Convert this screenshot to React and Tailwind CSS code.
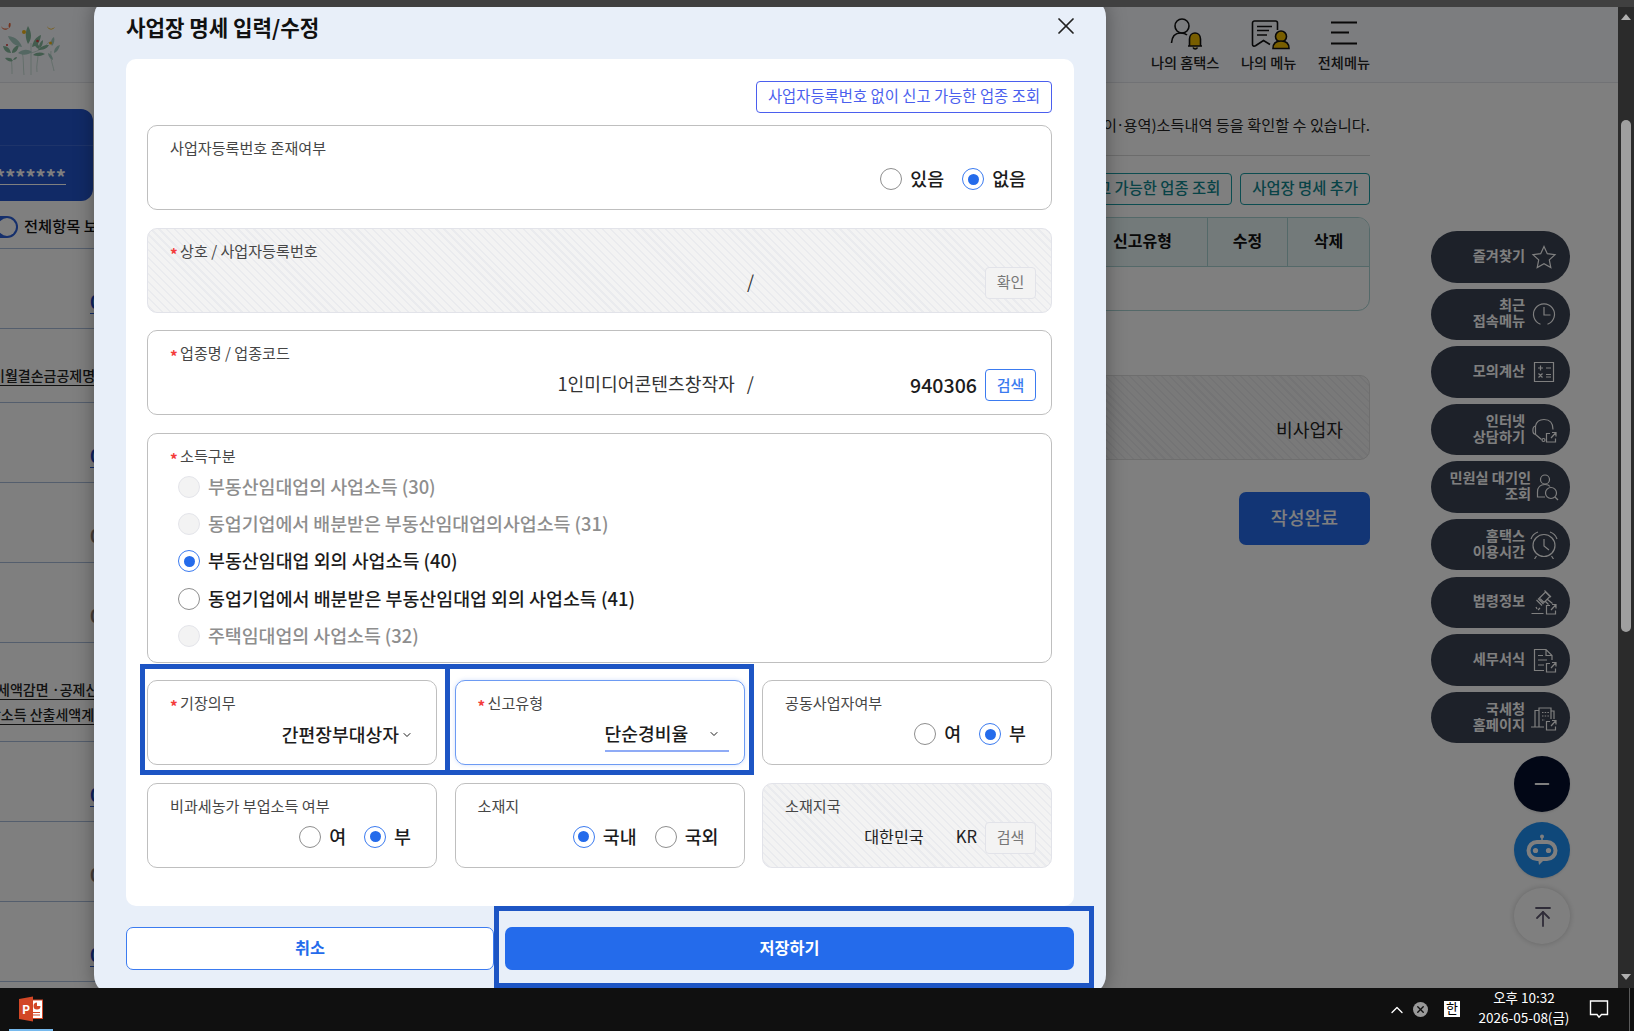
import {
  ArrowUpToLine,
  ChevronDown,
  ChevronUp,
  Minus,
  X,
} from "lucide-react";

const quickMenu = [
  { lines: ["즐겨찾기"], icon: "star" },
  { lines: ["최근", "접속메뉴"], icon: "clock" },
  { lines: ["모의계산"], icon: "calc" },
  { lines: ["인터넷", "상담하기"], icon: "headset" },
  { lines: ["민원실 대기인", "조회"], icon: "person", wide: true },
  { lines: ["홈택스", "이용시간"], icon: "alarm" },
  { lines: ["법령정보"], icon: "gavel" },
  { lines: ["세무서식"], icon: "doc" },
  { lines: ["국세청", "홈페이지"], icon: "building" },
];

const incomeTypes = [
  { label: "부동산임대업의 사업소득 (30)", disabled: true },
  { label: "동업기업에서 배분받은 부동산임대업의사업소득 (31)", disabled: true },
  { label: "부동산임대업 외의 사업소득 (40)", checked: true },
  { label: "동업기업에서 배분받은 부동산임대업 외의 사업소득 (41)" },
  { label: "주택임대업의 사업소득 (32)", disabled: true },
];

const external = <path d="M20 17.500h-3.500v8.500h9v-3.500M22 16.500h4v4M26 16.500l-5 5.500" />;

const quickIcons = {
  star: <path d="M14 3.500l3.300 7.200 7.700.9-5.700 5.300 1.500 7.700-6.800-3.900-6.800 3.900 1.500-7.700L3 11.600l7.700-.9z" />,
  clock: (
    <>
      <path d="M10.500 24.200a10.500 10.500 0 1 1 7 0" />
      <path d="M14 7v8h6.500" />
    </>
  ),
  calc: (
    <>
      <path d="M4.500 4.500h19v19h-19z" />
      <path d="M8 10h5M10.500 7.500v5M16 10h5M8.500 15.500l4 4M12.500 15.500l-4 4M16 16.500h5M16 19h5" />
    </>
  ),
  headset: (
    <>
      <path d="M5.500 18.500c-3.500-.5-3.500-8 0-8.500M5.500 10C6.500 5 9.500 3.500 14 3.500c6 0 9 4 9 10M5.500 10v8.500l6 5" />
      <circle cx="13.500" cy="24" r="1.500" />
      {external}
    </>
  ),
  person: (
    <>
      <circle cx="14" cy="6.500" r="4.500" />
      <path d="M14 24H6.500V19c0-5 3-7.500 7.500-7.500 2 0 4 .5 5 2" />
      <circle cx="20" cy="20" r="5.500" />
      <path d="M24 24l3 3" />
    </>
  ),
  alarm: (
    <>
      <circle cx="14" cy="14.500" r="11" />
      <path d="M14 8v7l5 4M1 8c1-3 4-6 7-7M27 8c-1-3-4-6-7-7M6.500 25l-2 3M21.500 25l2 3" />
    </>
  ),
  gavel: (
    <>
      <path d="M9.500 10l6-6 4.500 4.500-6 6zM6.500 12l5.500 5.500M8 10.500l5.500 5.500M14.500 2.500l6.500 6.500M17.500 11.500l5 4M15.500 13.500l3 3M1.500 25.500h12M6 19l1 2M10 20l-2 2" />
      {external}
    </>
  ),
  doc: (
    <>
      <path d="M14 24.500H4.500v-21H16l6 6V14M16 3.500v6h6M8 9.500h5M8 14h9M8 19h6" />
      {external}
    </>
  ),
  building: (
    <>
      <path d="M1 23h13M5 23V6.500h4M9 23V4h12v3h3v8M21 7v8" />
      <path d="M12 8.500h7M12 12h7M12 16h3" strokeDasharray="1.500 1.200" />
      {external}
    </>
  ),
};

function QuickIcon({ name }) {
  return (
    <svg
      viewBox="0 0 28 28"
      className="w-7 h-7 shrink-0 fill-none stroke-white"
      strokeWidth="1.2"
    >
      {quickIcons[name]}
    </svg>
  );
}

function Radio({ label, checked, disabled }) {
  return (
    <label className="flex items-center gap-2">
      <span
        className={`w-[22px] h-[22px] rounded-full border flex items-center justify-center ${
          checked
            ? "border-[#3b7bf0] bg-white"
            : disabled
              ? "border-[#e4e5ea] bg-[#f3f3f3]"
              : "border-[#8e8e8e] bg-white"
        }`}
      >
        {checked && <span className="w-[11px] h-[11px] rounded-full bg-[#246beb]" />}
      </span>
      <span
        className={`text-[18.400px] leading-[22px] -mt-[2px] font-medium ${
          disabled ? "text-[#8e8e8e] tracking-[-0.05px]" : "text-[#1c1c1c]"
        }`}
      >
        {label}
      </span>
    </label>
  );
}

function RadioRow({ options }) {
  return (
    <div className="h-[30px] mt-[6px] pr-[10px] flex items-center justify-end gap-[18px]">
      {options.map((option) => (
        <Radio key={option.label} {...option} />
      ))}
    </div>
  );
}

function Field({ label, required, variant = "normal", className = "h-[85px]", children }) {
  const variants = {
    normal: "bg-white border-[#bfbfbf]",
    active: "bg-white border-[#6d9bf3] shadow-[0_0_4px_rgba(80,130,240,0.25)]",
    disabled:
      "border-[#e2e3e9] bg-[repeating-linear-gradient(45deg,#f3f3f3_0px,#f3f3f3_4px,#eaebee_4px,#eaebee_5.600px)]",
  };
  return (
    <div className={`rounded-[10px] border pl-[22px] pr-[15px] pt-[12px] ${variants[variant]} ${className}`}>
      <p className="h-5 text-[15.100px] leading-[18px] text-[#464646] flex">
        {required && <span className="text-[#f43b3b] font-bold w-[10px] leading-[24px]">*</span>}
        {label}
      </p>
      {children}
    </div>
  );
}

function SmallButton({ children, disabled }) {
  return (
    <button
      className={`w-[51px] h-8 pb-[2px] shrink-0 rounded-[4px] border text-[15px] leading-none ${
        disabled
          ? "border-[#e2e3e9] bg-[#f3f3f3] text-[#777]"
          : "border-[#3b7bf0] bg-white text-[#3b7bf0] font-medium"
      }`}
    >
      {children}
    </button>
  );
}

function HeaderIcons() {
  return (
    <div className="flex gap-[21.500px] pt-[10px] text-[14.200px] leading-5 font-medium text-[#222] whitespace-nowrap">
      <div className="flex flex-col items-center">
        <svg viewBox="0 0 34 36" className="w-[34px] h-9 ml-1 fill-none stroke-[#111]" strokeWidth="1.600">
          <circle cx="12" cy="9" r="7" />
          <path d="M1.500 26c.5-7 4-10 9-10 3 0 5 .5 6.500 2" />
          <path
            d="M19.500 29v-7c0-8 11-8 11 0v7h1.500H18zM23 30.500c1 2 3.500 2 4.500 0"
            className="fill-[#f0bd00]"
          />
        </svg>
        <span className="-mt-px">나의 홈택스</span>
      </div>
      <div className="flex flex-col items-center">
        <svg viewBox="0 0 40 36" className="w-10 h-9 ml-[2px] fill-none stroke-[#111]" strokeWidth="1.600">
          <path d="M27.500 13V6a2 2 0 0 0-2-2h-21a2 2 0 0 0-2 2v21.500c0 1.500 1.500 2 3 1.200l8-5.200 6.500 4" />
          <path d="M7 9.500h15M7 13.500h12M7 18h10" />
          <circle cx="31" cy="19.500" r="5.500" className="fill-[#f0bd00]" />
          <path d="M23 31.500c0-5 3-7.500 8-7.500s8 2.500 8 7.500z" className="fill-[#f0bd00]" />
        </svg>
        <span className="-mt-px">나의 메뉴</span>
      </div>
      <div className="flex flex-col items-center">
        <svg viewBox="0 0 28 36" className="w-7 h-9 fill-none stroke-[#111]" strokeWidth="2">
          <path d="M1 5.500h26M1 15.500h18M1 26.500h26" />
        </svg>
        <span className="-mt-px">전체메뉴</span>
      </div>
    </div>
  );
}

function Flower() {
  return (
    <svg viewBox="0 0 62 56" className="w-[62px] h-14">
      <g fill="none" stroke="#b5d2c4" strokeWidth="0.7">
        <path d="M11 35c1 6 1 10 1 16M22 28c2 8 1 16 2 24M31 20v32M38 32c0 6-2 10-1 17M51 28c-1 8 2 14 3 20M31 30c8-2 14-6 18-11" />
      </g>
      <g fill="#86b89c">
        <path d="M28 3c4 7 4 13 0 18-3-6-3-12 0-18zM41 12c-1 8-4 11-9 12 1-6 4-10 9-12z" />
        <path d="M3 23c5 0 7 3 8 7-5 0-7-3-8-7zM19 22c-1 5-3 8-7 8 0-4 3-7 7-8zM5 35c4-1 7 0 8 3-3 1-6 0-8-3zM17 34c-2 0-3 1-4 3 2 0 4-1 4-3z" />
        <path d="M49 22c-5 0-9 2-11 5 5 0 9-1 11-5zM33 32c4-3 8-3 12-1-3 2-8 3-12 1zM34 19c4 1 6 4 5 7-3-1-5-4-5-7zM43 17c0 4-1 7-4 8 0-4 1-6 4-8z" />
      </g>
      <g fill="#a9cfc4">
        <path d="M8 13c8 1 12 5 14 11-7-1-12-5-14-11zM18 30c5-4 10-4 14-1-4 3-9 4-14 1zM60 22c-4 1-6 4-6 8 3-1 5-4 6-8zM48 30c3 1 5 4 5 7-3-1-5-4-5-7zM54 14c-3 2-4 6-2 9 2-2 3-6 2-9z" />
      </g>
      <path d="M1 3c2 3 4 3 8 2-3 3-7 2-8-2zM9 5c-1-3 0-5 1-6 1 2 1 5-1 6z" fill="#e8663a" />
      <path d="M47 3c2 3 4 4 8 1-3 4-7 3-8-1z" fill="#f3b619" />
      <circle cx="24" cy="9" r="2" fill="#f3b619" />
      <circle cx="50.500" cy="20" r="1.500" fill="#f3b619" />
      <circle cx="37.500" cy="18" r="1.300" fill="#d83a3a" />
      <circle cx="7" cy="22" r="1" fill="#d83a3a" />
    </svg>
  );
}

function AmountRow({ link }) {
  return (
    <div className="h-20 border-b border-[#a9bdda] pl-[90px] pt-[39px]">
      <span
        className={`inline-block text-[19px] leading-[25px] font-bold ${
          link ? "text-[#1a4ac9] border-b border-[#2a5fd9]" : "text-[#8a7f7a]"
        }`}
      >
        0
      </span>
    </div>
  );
}

function SideSummary() {
  return (
    <aside className="w-24 shrink-0 overflow-hidden whitespace-nowrap">
      <div className="mt-[26px] w-[93px] h-[92px] rounded-r-[12px] bg-[#2254cc] overflow-hidden">
        <div className="h-[37px] border-b border-[#3d69d4]" />
        <div className="pt-[14px]">
          <span className="inline-block -ml-[5px] border-b border-white text-white text-[20px] font-bold leading-[34px] h-[25px]">
            *******
          </span>
        </div>
      </div>
      <div className="h-[48px] flex items-center border-b border-[#a9bdda] pt-[5px]">
        <span className="w-10 h-[22px] -ml-[22px] rounded-full bg-[#2a5fd9] shrink-0 flex items-center justify-end pr-[2px]">
          <span className="w-[18px] h-[18px] rounded-full bg-white" />
        </span>
        <span className="ml-[6px] -mt-[3px] text-[15.300px] font-medium text-[#111]">전체항목 보기</span>
      </div>
      <AmountRow link />
      <div className="h-[74px] border-b border-[#a9bdda] pt-[36px] text-[14px] font-medium text-[#222]">
        <span className="inline-block ml-[-8px] leading-5 border-b border-[#222]">이월결손금공제명세서</span>
      </div>
      <AmountRow link />
      <AmountRow />
      <AmountRow />
      <div className="h-[99px] border-b border-[#a9bdda] pt-[36px] text-[14px] font-medium text-[#222] flex flex-col items-start gap-[4px]">
        <span className="ml-[-3px] leading-5 border-b border-[#222]">세액감면 ·공제신청서</span>
        <span className="ml-[-25px] leading-5 border-b border-[#222]">종합소득 산출세액계산서</span>
      </div>
      <AmountRow link />
      <AmountRow />
      <AmountRow link />
    </aside>
  );
}

function PageContent() {
  const teal =
    "h-8 pb-[2px] px-[11px] rounded-[4px] border border-[#1a9aa2] text-[#11868e] text-[15.350px] font-medium";
  return (
    <section className="w-[1274px] shrink-0 flex flex-col items-end whitespace-nowrap">
      <p className="w-full h-[73px] pt-[30px] border-b border-[#d9d9d9] text-right text-[15.200px] leading-[22px] text-[#222]">
        근로소득, 기타소득, (이<span className="-mx-px">·</span>용역)소득내역 등을 확인할 수 있습니다.
      </p>
      <div className="flex gap-2 mt-[17px]">
        <button className={teal}>사업자등록번호 없이 신고 가능한 업종 조회</button>
        <button className={teal}>사업장 명세 추가</button>
      </div>
      <div className="mt-3 w-full h-[94px] rounded-[12px] border border-[#a9d3d3] overflow-hidden">
        <div className="h-[49px] bg-[#e6f4f4] border-b border-[#a9d3d3] flex justify-end text-base font-bold text-[#111] text-center leading-[45px]">
          <span className="w-[129px]">신고유형</span>
          <span className="w-20 border-l border-[#a9d3d3]">수정</span>
          <span className="w-[82px] border-l border-[#a9d3d3]">삭제</span>
        </div>
      </div>
      <div className="mt-[64px] w-full h-[85px] rounded-[10px] border border-[#dcdcdc] pr-[26px] pt-[40px] text-right text-[18.200px] leading-[26px] text-[#222] bg-[repeating-linear-gradient(45deg,#f3f3f3_0px,#f3f3f3_4px,#e8e8ea_4px,#e8e8ea_5.600px)]">
        비사업자
      </div>
      <button className="mt-8 w-[131px] h-[53px] pb-[2px] rounded-[7px] bg-[#246beb] text-white text-[18.300px] font-medium">
        작성완료
      </button>
    </section>
  );
}

function QuickMenu() {
  return (
    <nav className="ml-[61px] mt-[148px] w-[139px] flex flex-col items-end">
      <div className="flex flex-col gap-[6.100px]">
        {quickMenu.map((item) => (
          <button
            key={item.icon}
            className={`w-[139px] h-[51.500px] rounded-full bg-[#3a4252] flex items-center justify-end text-white ${
              item.wide ? "gap-0 pr-[11px]" : "gap-[5px] pr-3"
            }`}
          >
            <span className="text-right text-[14.200px] leading-4 font-bold pb-[4px]">
              {item.lines.map((line) => (
                <span key={line} className="block">{line}</span>
              ))}
            </span>
            <QuickIcon name={item.icon} />
          </button>
        ))}
      </div>
      <div className="mt-[13px] flex flex-col gap-[10px]">
        <button className="w-14 h-14 rounded-full bg-[#040f2c] text-white flex items-center justify-center shadow">
          <Minus className="w-[22px] h-[22px]" strokeWidth={2} />
        </button>
        <button className="w-14 h-14 rounded-full bg-[#1e90f5] flex items-center justify-center shadow">
          <svg viewBox="0 0 34 34" className="w-[34px] h-[34px]">
            <circle cx="17" cy="3.500" r="2" fill="#fff" />
            <path d="M17 4v6" stroke="#fff" strokeWidth="1.500" />
            <path d="M13 25h8l-7 7z" fill="#fff" />
            <rect x="3.500" y="9" width="27" height="17" rx="8.500" fill="#1e90f5" stroke="#fff" strokeWidth="4" />
            <circle cx="10.500" cy="17.500" r="2.600" fill="#fff" />
            <circle cx="23.500" cy="17.500" r="2.600" fill="#fff" />
          </svg>
        </button>
        <button className="w-14 h-14 rounded-full bg-white text-[#5f5870] flex items-center justify-center shadow-[0_0_6px_rgba(0,0,0,0.2)]">
          <ArrowUpToLine className="w-6 h-6 mt-[2px] ml-px" strokeWidth={1.800} />
        </button>
      </div>
    </nav>
  );
}

function BusinessModal() {
  return (
    <div className="relative ml-[94px] -mt-[10px] w-[1011.500px] h-[998px] shrink-0 rounded-[20px] bg-[#e8eff9] px-[32px] shadow-[0_0_20px_rgba(0,0,0,0.35)]">
      <header className="h-[62px] flex items-center justify-between">
        <h1 className="text-[21.200px] leading-7 -mt-[2px] font-bold text-[#111]">사업장 명세 입력/수정</h1>
        <X className="w-7 h-7 -mr-[6px] -mt-[4px] text-[#222]" strokeWidth={1.500} />
      </header>

      <div className="h-[847px] w-[948px] rounded-[10px] bg-white pl-[21px] pr-[22px] pt-[22px]">
        <div className="flex justify-end mb-3">
          <button className="w-[296px] h-8 pb-[2px] rounded-[4px] border border-[#4b5fee] text-[#4b5fee] text-[15.400px] whitespace-nowrap">
            사업자등록번호 없이 신고 가능한 업종 조회
          </button>
        </div>

        <div className="flex flex-col gap-[17.500px]">
          <Field label="사업자등록번호 존재여부">
            <RadioRow options={[{ label: "있음" }, { label: "없음", checked: true }]} />
          </Field>

          <Field label="상호 / 사업자등록번호" required variant="disabled">
            <div className="flex items-center justify-end pt-[6px] text-[18px] text-[#333]">
              <span className="-mt-[2px]">/</span>
              <span className="w-[231px]" />
              <SmallButton disabled>확인</SmallButton>
            </div>
          </Field>

          <Field label="업종명 / 업종코드" required>
            <div className="flex items-center justify-end h-8 mt-[6px] text-[18.200px] text-[#333]">
              <span className="-mt-[2px]">1인미디어콘텐츠창작자</span>
              <span className="ml-3 -mt-[2px]">/</span>
              <span className="w-[223px] mr-[8px] -mt-px text-right text-[19.600px] font-medium text-[#1c1c1c]">
                940306
              </span>
              <SmallButton>검색</SmallButton>
            </div>
          </Field>

          <Field label="소득구분" required className="h-[230px]">
            <div className="pl-2 pt-[10px] flex flex-col gap-[15.400px]">
              {incomeTypes.map((type) => (
                <Radio key={type.label} {...type} />
              ))}
            </div>
          </Field>

          <div className="grid grid-cols-3 gap-[17.500px]">
            <Field label="기장의무" required>
              <div className="h-11 pr-2 flex items-center justify-end text-[18.200px] font-medium text-[#1c1c1c]">
                간편장부대상자
                <ChevronDown className="w-3 h-3 ml-[2px]" strokeWidth={2} />
              </div>
            </Field>
            <Field label="신고유형" required variant="active">
              <div className="flex justify-end pt-[6px]">
                <div className="w-[124px] h-[33px] pb-px border-b-2 border-[#8fabf6] flex items-center justify-between pr-[9px] text-[18.200px] font-medium text-[#1c1c1c]">
                  단순경비율
                  <ChevronDown className="w-3 h-3" strokeWidth={2} />
                </div>
              </div>
            </Field>
            <Field label="공동사업자여부">
              <RadioRow options={[{ label: "여" }, { label: "부", checked: true }]} />
            </Field>
            <Field label="비과세농가 부업소득 여부">
              <RadioRow options={[{ label: "여" }, { label: "부", checked: true }]} />
            </Field>
            <Field label="소재지">
              <RadioRow options={[{ label: "국내", checked: true }, { label: "국외" }]} />
            </Field>
            <Field label="소재지국" variant="disabled">
              <div className="flex items-center justify-end pt-[6px] text-[16.200px] text-[#222]">
                <span className="mr-8 -mt-[2px]">대한민국</span>
                <span className="mr-[8px] -mt-[2px] text-[16.600px]">KR</span>
                <SmallButton disabled>검색</SmallButton>
              </div>
            </Field>
          </div>
        </div>
      </div>

      <footer className="flex gap-[11px] pt-[21px] w-[948px]">
        <button className="w-[368px] h-[43px] pb-[2px] rounded-[7px] border border-[#3b7bf0] bg-white text-[#246beb] text-[16.300px] font-bold">
          취소
        </button>
        <button className="flex-1 h-[43px] pb-[2px] rounded-[7px] bg-[#246beb] text-white text-[16.300px] font-bold">
          저장하기
        </button>
      </footer>

      {/* Highlight frames around the fields to check */}
      <div className="absolute left-[46px] top-[667px] w-[310px] h-[111px] border-[5px] border-[#1d55c4]" />
      <div className="absolute left-[351px] top-[667px] w-[309px] h-[111px] border-[5px] border-[#1d55c4]" />
      <div className="absolute left-[400px] top-[909px] w-[600px] h-[82px] border-[5px] border-[#1d55c4]" />
    </div>
  );
}

function Taskbar() {
  return (
    <footer className="h-[43px] shrink-0 bg-[#101010] text-white flex items-center justify-between">
      <div className="ml-[9px] w-11 h-full flex flex-col items-center justify-between border-b-2 border-[#76b9ed]">
        <svg viewBox="0 0 26 26" className="w-[26px] h-[26px] mt-2">
          <rect x="13" y="4" width="11.500" height="18.500" fill="#fff" stroke="#d24726" />
          <path d="M19 6.500a3.500 3.500 0 1 0 3.500 3.500H19z" fill="#d24726" />
          <path d="M15 16.500h7M15 19h7" stroke="#d24726" />
          <path d="M1 3l14-2.500v25L1 23z" fill="#d24726" />
          <text x="4" y="17.500" fontSize="12" fontWeight="700" fill="#fff">P</text>
        </svg>
      </div>
      <div className="h-full flex items-center">
        <ChevronUp className="w-5 h-5 mr-[6px]" strokeWidth={1.600} />
        <span className="w-[15px] h-[15px] -mt-px rounded-full bg-[#9a9a9a] text-[#101010] flex items-center justify-center">
          <X className="w-[11px] h-[11px]" strokeWidth={3} />
        </span>
        <span className="ml-4 -mt-px w-4 h-4 bg-white text-black text-[13px] leading-[14px] text-center">한</span>
        <div className="ml-[17px] -mt-[4px] w-[94px] text-center text-[13.500px] leading-[19.500px] whitespace-nowrap">
          <p>오후 10:32</p>
          <p>2026-05-08(금)</p>
        </div>
        <svg viewBox="0 0 20 20" className="w-5 h-5 ml-[18px] -mt-px fill-none stroke-white" strokeWidth="1.400">
          <path d="M1.500 2h17v13.500h-6L10 18.200l-2-2.700H1.500z" />
        </svg>
        <span className="ml-[20px] mr-1 w-px h-full bg-[#5a5a5a]" />
      </div>
    </footer>
  );
}

export default function App() {
  return (
    <div className="w-[1634px] h-[1031px] flex flex-col overflow-hidden font-['Noto_Sans_CJK_KR',sans-serif]">
      <div className="h-[7px] shrink-0 bg-[#404040]" />
      <div className="h-[981px] shrink-0 flex">
        <div className="relative w-[1618px] h-full bg-white overflow-hidden">
          <div className="h-[76px] bg-[#f8faff] border-b border-[#e2e4ea] flex justify-between pr-[248px]">
            <div className="pt-4">
              <Flower />
            </div>
            <HeaderIcons />
          </div>
          <div className="flex">
            <SideSummary />
            <PageContent />
            <QuickMenu />
          </div>

          {/* Dimmed layer with the dialog */}
          <div className="absolute inset-0 bg-black/50 flex items-start">
            <BusinessModal />
          </div>
        </div>

        {/* Scrollbar */}
        <div className="w-4 h-full bg-[#2b2b2b] flex flex-col items-center">
          <span className="mt-[7px] border-x-[5px] border-b-[6px] border-x-transparent border-b-[#b0b0b0]" />
          <span className="mt-[100px] w-[10px] h-[512px] rounded-full bg-[#9f9f9f]" />
          <span className="mt-[342px] border-x-[5px] border-t-[6px] border-x-transparent border-t-[#b0b0b0]" />
        </div>
      </div>
      <Taskbar />
    </div>
  );
}
